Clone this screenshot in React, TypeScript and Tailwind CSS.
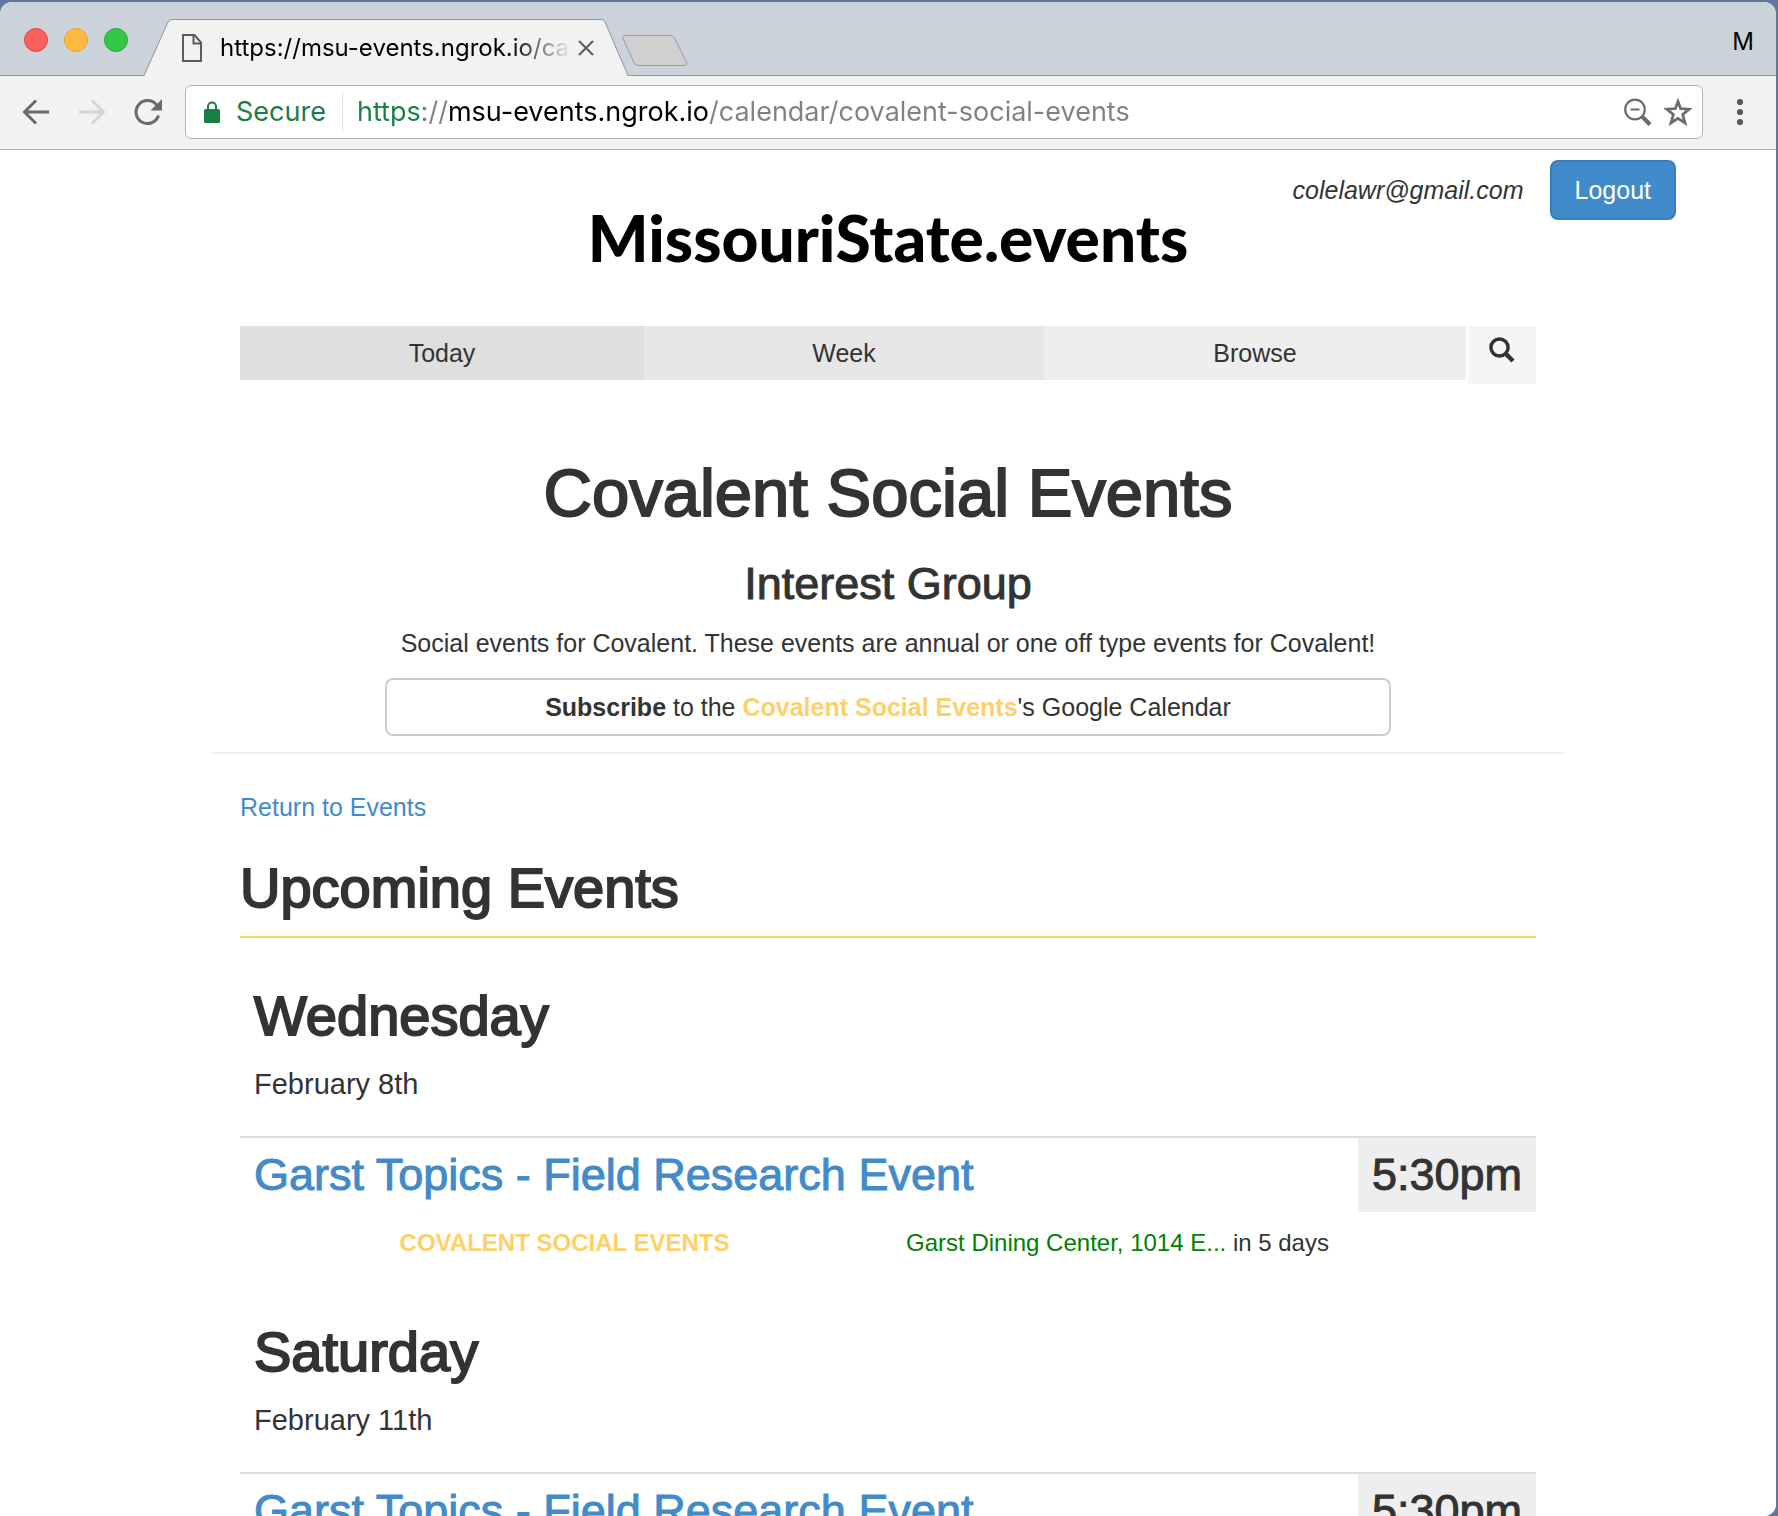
import type { ReactNode } from 'react';

type EventItem = {
  title: string;
  time: string;
  calendar: string;
  place: string;
  when: string;
};

type Day = { name: string; date: string; events: EventItem[] };

const garst: EventItem = {
  title: 'Garst Topics - Field Research Event',
  time: '5:30pm',
  calendar: 'Covalent Social Events',
  place: 'Garst Dining Center, 1014 E...',
  when: 'in 5 days',
};

const days: Day[] = [
  { name: 'Wednesday', date: 'February 8th', events: [garst] },
  { name: 'Saturday', date: 'February 11th', events: [garst] },
];

function TrafficLights() {
  return (
    <div className="flex gap-4 pt-[26px] pl-6">
      <button aria-label="Close window" className="size-6 rounded-full border border-[#e2463f] bg-[#fc605c]" />
      <button aria-label="Minimize window" className="size-6 rounded-full border border-[#dfa136] bg-[#fdbc40]" />
      <button aria-label="Zoom window" className="size-6 rounded-full border border-[#27aa35] bg-[#34c84a]" />
    </div>
  );
}

function TabStrip() {
  return (
    <div className="flex h-[74px] shrink-0 items-start rounded-t-xl bg-[#cbd2da] shadow-[inset_0_-1px_0_#8d939f]">
      <TrafficLights />
      <div className="relative ml-4 h-[74px] w-[484px] shrink-0">
        <svg className="absolute inset-0" width="484" height="74" viewBox="0 0 484 74" aria-hidden="true">
          <path d="M0 74 L24 20 Q25.500 17.500 28 17.500 H457 Q459.500 17.500 461 20 L484 74 Z" fill="#f2f2f2" />
          <path
            d="M0 73.500 L24 20 Q25.500 17.500 28 17.500 H457 Q459.500 17.500 461 20 L484 73.500"
            fill="none"
            stroke="#8d939f"
          />
        </svg>
        <div className="relative flex h-[74px] items-center pt-[18px] pl-[38px]">
          <svg width="20" height="28" viewBox="0 0 20 28" fill="none" stroke="#5a5a5a" strokeWidth="2" aria-hidden="true">
            <path d="M1 1 H12.500 L19 8.500 V27 H1 Z" />
            <path d="M11.500 1 V9.500 H19" />
          </svg>
          <span className="ml-[18px] w-[348px] text-2xl leading-8 whitespace-nowrap text-black [mask-image:linear-gradient(to_right,#000_290px,transparent_352px)]">
            https://msu-events.ngrok.io/ca
          </span>
          <button aria-label="Close tab" className="ml-2.5">
            <svg width="16" height="16" viewBox="0 0 16 16" fill="none" stroke="#5a5a5a" strokeWidth="2">
              <path d="M1 1 L15 15 M15 1 L1 15" />
            </svg>
          </button>
        </div>
      </div>
      <button aria-label="New tab" className="-ml-[7px] pt-[32px]">
        <svg width="68" height="33" viewBox="0 0 68 33">
          <path
            d="M4 1.500 H49 Q52 1.500 53.500 4 L65.500 28 Q66.500 31.500 63 31.500 H18 Q14.500 31.500 13 28.500 L2 4.500 Q1 1.500 4 1.500 Z"
            fill="#d0d0d0"
            stroke="#999da3"
          />
        </svg>
      </button>
      <button className="mt-6 mr-[22px] ml-auto text-2xl leading-8 text-black">M</button>
    </div>
  );
}

function IconButton({ label, children }: { label: string; children: ReactNode }) {
  return (
    <button aria-label={label} className="shrink-0">
      {children}
    </button>
  );
}

function Toolbar() {
  return (
    <div className="flex h-[74px] shrink-0 items-center border-b border-[#b5b5b5] bg-[#f2f2f2] pr-[32px] pb-0.5 pl-[22px]">
      <IconButton label="Back">
        <svg width="28" height="26" viewBox="0 0 28 26" fill="none" stroke="#6b6b6b" strokeWidth="3">
          <path d="M27 13 H3 M14 1.500 L2.500 13 L14 24.500" />
        </svg>
      </IconButton>
      <div className="ml-7 flex">
        <IconButton label="Forward">
          <svg width="28" height="26" viewBox="0 0 28 26" fill="none" stroke="#d5d5d5" strokeWidth="3">
            <path d="M1 13 H25 M14 1.500 L25.500 13 L14 24.500" />
          </svg>
        </IconButton>
      </div>
      <div className="ml-7 flex">
        <IconButton label="Reload">
          <svg width="28" height="28" viewBox="0 0 28 28" fill="none">
            <path d="M23 7.500 A11.500 11.500 0 1 0 24.500 17.500" stroke="#6b6b6b" strokeWidth="3" />
            <path d="M28 1 V12.500 H16.500 Z" fill="#6b6b6b" />
          </svg>
        </IconButton>
      </div>
      <div className="ml-[23px] flex h-[54px] min-w-0 flex-1 items-center rounded-md border border-[#b3b3b3] bg-white pr-2.5 pl-[18px]">
        <svg width="16" height="22" viewBox="0 0 16 22" aria-hidden="true">
          <rect y="8" width="16" height="14" rx="1.500" fill="#188045" />
          <path d="M4 9 V5.500 A4 4 0 0 1 12 5.500 V9" fill="none" stroke="#188045" strokeWidth="2" />
        </svg>
        <span className="ml-4 text-[27px] leading-9 text-[#188045]">Secure</span>
        <span className="ml-4 h-10 w-px bg-[#e3e3e3]" />
        <input
          aria-label="Address"
          type="text"
          defaultValue="https://msu-events.ngrok.io/calendar/covalent-social-events"
          className="ml-3.5 min-w-0 flex-1 bg-[linear-gradient(to_right,#188045_67px,#808080_67px,#808080_93px,#000_93px,#000_352px,#808080_352px)] bg-clip-text text-[27px] leading-9 text-transparent outline-none"
        />
        <IconButton label="Zoom level">
          <svg width="28" height="28" viewBox="0 0 28 28" fill="none" stroke="#6b6b6b">
            <circle cx="11" cy="11.500" r="9.800" strokeWidth="2.200" />
            <path d="M6.500 11.500 H15.500" strokeWidth="2" />
            <path d="M18.500 19 L26 26.500" strokeWidth="4" />
          </svg>
        </IconButton>
        <div className="ml-3 flex">
          <IconButton label="Bookmark this page">
            <svg width="28" height="28" viewBox="0 0 28 28" fill="none" stroke="#6b6b6b" strokeWidth="2.800">
              <path d="M14 3.500 L16.700 10.700 L25.200 11.200 L18.700 16.500 L21 25 L14 20.400 L7 25 L9.300 16.500 L2.800 11.200 L11.300 10.700 Z" />
            </svg>
          </IconButton>
        </div>
      </div>
      <div className="ml-[33px] flex">
        <IconButton label="Menu">
          <svg width="8" height="28" viewBox="0 0 8 28" fill="#5a5a5a">
            <circle cx="4" cy="4" r="3.100" />
            <circle cx="4" cy="14" r="3.100" />
            <circle cx="4" cy="24" r="3.100" />
          </svg>
        </IconButton>
      </div>
    </div>
  );
}

function PageHeader() {
  return (
    <header className="grid">
      <a
        href="#home"
        className="col-start-1 row-start-1 justify-self-center pt-[58px] font-[Lato,sans-serif] text-[64px] leading-[60px] font-black text-black"
      >
        MissouriState.events
      </a>
      <div className="col-start-1 row-start-1 flex items-center gap-[26px] self-start justify-self-end pt-2.5 pr-[100px]">
        <em>colelawr@gmail.com</em>
        <button className="h-[60px] rounded-lg border-2 border-[#357ebd] bg-[#428bca] px-[23px] text-white">
          Logout
        </button>
      </div>
    </header>
  );
}

function SiteNav() {
  return (
    <nav className="mt-[58px] flex items-start text-center leading-[54px]">
      <a href="#today" className="flex-[404] bg-[#dfdfdf]">
        Today
      </a>
      <a href="#week" className="flex-[400] bg-[#e7e7e7]">
        Week
      </a>
      <a href="#browse" className="flex-[422] bg-[#eeeeee]">
        Browse
      </a>
      <button aria-label="Search" className="ml-0.5 flex h-[58px] w-[68px] justify-center bg-[#f5f5f5] pt-[11px]">
        <svg width="26" height="26" viewBox="0 0 26 26" fill="none" stroke="#333">
          <circle cx="10.500" cy="10.500" r="8.600" strokeWidth="3.500" />
          <path d="M16.500 16.500 L24 24" strokeWidth="4.500" />
        </svg>
      </button>
    </nav>
  );
}

function EventRow({ event }: { event: EventItem }) {
  return (
    <article className="border-t-2 border-[#ddd]">
      <div className="flex justify-between text-[45px] leading-[74px] [-webkit-text-stroke:1px]">
        <h4 className="pl-3.5 text-[#428bca]">
          <a href="#event">{event.title}</a>
        </h4>
        <time className="bg-[#eeeeee] px-3.5">{event.time}</time>
      </div>
      <div className="mt-[13px] mr-[142px] ml-12 grid grid-cols-2 text-center text-2xl leading-9">
        <strong className="text-[#fcd168] uppercase">{event.calendar}</strong>
        <span>
          <span className="text-[#008000]">{event.place}</span> {event.when}
        </span>
      </div>
    </article>
  );
}

export default function App() {
  return (
    <div className="h-screen overflow-hidden bg-[#5f7899] pt-0.5 pr-0.5">
      <div className="flex h-full flex-col overflow-hidden rounded-t-xl rounded-br-xl bg-white font-[Inter,sans-serif]">
        <TabStrip />
        <Toolbar />
        <main className="min-h-0 flex-1 overflow-hidden bg-white font-['Liberation_Sans',sans-serif] text-[25px] leading-9 text-[#333]">
          <PageHeader />
          <div className="mx-auto max-w-[1350px]">
            <div className="px-[27px]">
              <SiteNav />
            </div>
            <section className="border-b-2 border-[#eee] pb-4 text-center">
              <h1 className="mt-[73px] text-[67px] leading-[72px] [-webkit-text-stroke:2px]">
                Covalent Social Events
              </h1>
              <h2 className="mt-[31px] text-[45px] leading-[48px] [-webkit-text-stroke:1px]">Interest Group</h2>
              <p className="mt-[17px]">
                Social events for Covalent. These events are annual or one off type events for Covalent!
              </p>
              <button className="mx-auto mt-[17px] block h-[58px] w-3/4 max-w-[1006px] rounded-lg border-2 border-[#ccc]">
                <strong>Subscribe</strong> to the <strong className="text-[#fcd168]">Covalent Social Events</strong>
                's Google Calendar
              </button>
            </section>
            <section className="px-[27px] pt-[35px]">
              <a href="#events" className="text-[#428bca]">
                Return to Events
              </a>
              <h2 className="mt-[33px] border-b-2 border-[#fcd168] pb-[18px] text-[56px] leading-[60px] [-webkit-text-stroke:2px]">
                Upcoming Events
              </h2>
              <div className="flex flex-col gap-[61px] pt-12">
                {days.map((day) => (
                  <section key={day.name}>
                    <h3 className="pl-3.5 text-[56px] leading-[60px] [-webkit-text-stroke:2px]">{day.name}</h3>
                    <p className="mt-[18px] mb-8 pl-3.5 text-[29px] leading-10">{day.date}</p>
                    {day.events.map((event) => (
                      <EventRow key={event.title} event={event} />
                    ))}
                  </section>
                ))}
              </div>
            </section>
          </div>
        </main>
      </div>
    </div>
  );
}
